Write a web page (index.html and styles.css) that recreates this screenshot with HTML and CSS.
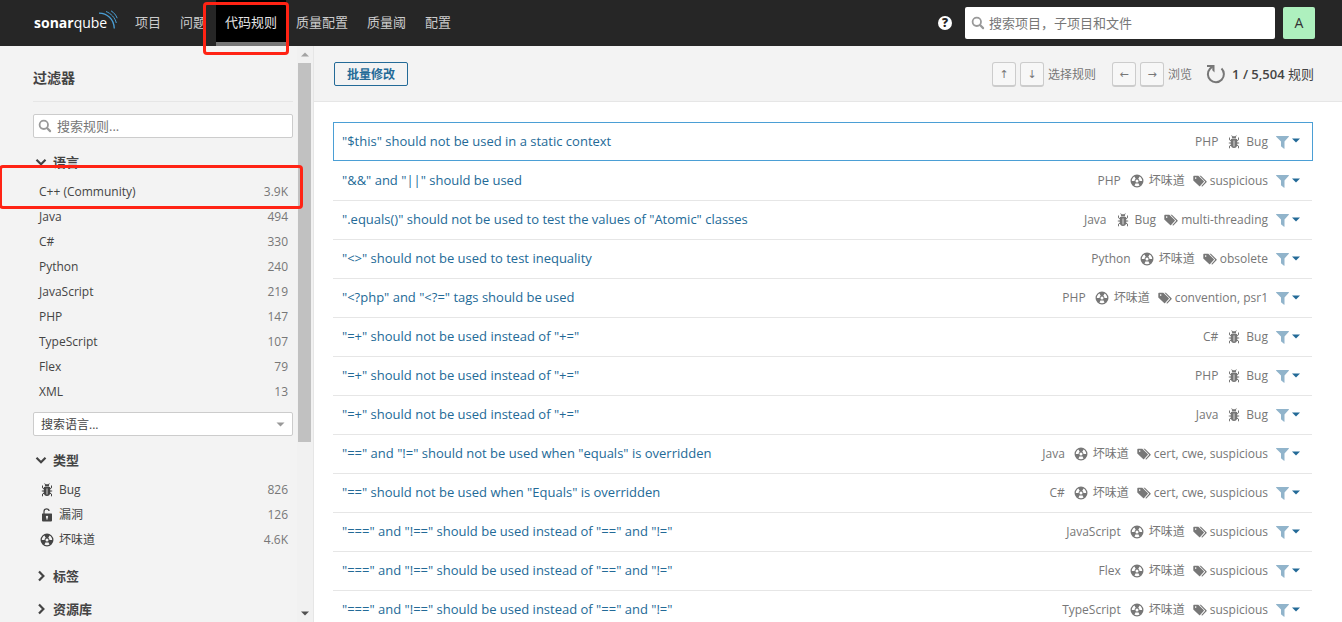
FILE: index.html
```html
<!DOCTYPE html>
<html lang="zh-CN">
<head>
<meta charset="utf-8">
<title>代码规则</title>
<link rel="stylesheet" href="styles.css">
</head>
<body>
<svg class="sprite" aria-hidden="true">
  <symbol id="bug" viewBox="0 0 12 14"><path fill="currentColor" d="M3.800 3.400C3.800 1.800 4.700 1.200 6 1.200s2.200.6 2.200 2.200zM3 4h6l.4 4.500C9.400 11.500 8 13 6 13s-3.400-1.500-3.400-4.500z"/><path fill="none" stroke="#f7f7f7" stroke-width=".8" d="M6 5.500v6"/><path fill="none" stroke="currentColor" stroke-width="1" d="M4.800 2.200 3.700.5M7.200 2.200 8.300.5M3.300 5.800 1.500 4.900V2.500M8.700 5.800l1.800-.9V2.500M3.200 8H.8M8.800 8h2.400M3.600 10l-2.100 1v2.300M8.400 10l2.100 1v2.300"/></symbol>
  <symbol id="lock" viewBox="0 0 12 14"><path fill="none" stroke="currentColor" stroke-width="1.200" d="M3 6V3.500C3 1.800 4 .8 5.600.8S8 1.700 8.100 3"/><path fill="currentColor" fill-rule="evenodd" d="M1.500 5.500h9q.5 0 .5.500v6.500q0 1-1 1H2q-1 0-1-1V6q0-.5.500-.5zM6 7.700a1.200 1.200 0 0 0-.6 2.200v1.600h1.200V9.900A1.200 1.200 0 0 0 6 7.700z"/></symbol>
  <symbol id="smell" viewBox="0.500 0.500 13 13"><path fill="currentColor" fill-rule="evenodd" d="M7 1a6 6 0 1 1 0 12A6 6 0 0 1 7 1zm0 4.600a1.400 1.400 0 1 0 0 2.800 1.400 1.400 0 0 0 0-2.800zM2.200 7h2.500c0-.8.4-1.500 1.100-2L4.600 2.900C3.100 3.800 2.200 5.300 2.200 7zm9.600 0c0-1.700-.9-3.200-2.400-4.100L8.200 5c.7.500 1.100 1.200 1.100 2zM4.600 11.100c1.500.9 3.300.9 4.800 0L8.200 9a2.300 2.300 0 0 1-2.400 0z"/></symbol>
  <symbol id="tags" viewBox="0 0 14 12"><path fill="currentColor" fill-rule="evenodd" d="M1 .8h4.300l5.400 5.300q.5.500 0 1L7.100 11q-.5.500-1 0L.3 5.600V1.500q0-.7.7-.7zM2.700 2.300a.8.800 0 1 0 0 1.600.8.800 0 0 0 0-1.600z"/><path fill="currentColor" d="M6.500.8h1.400L13.500 6.200q.5.500 0 1L9.600 11.200q-.5.400-1 0l-.2-.3 3.600-4q.2-.3 0-.5z"/></symbol>
  <symbol id="filter" viewBox="0 0 13 14"><path fill="currentColor" d="M.5 1h12q.8 0 .3.700L8.500 6.600v6.900q0 .6-.5.200l-2.800-2.200q-.2-.2-.2-.5V6.600L.2 1.700Q-.3 1 .5 1z"/></symbol>
  <symbol id="caret" viewBox="0 0 8 5"><path fill="currentColor" d="M0 .5h8L4 4.500z"/></symbol>
  <symbol id="search" viewBox="0 0 14 14"><circle cx="5.800" cy="5.800" r="4.200" fill="none" stroke="currentColor" stroke-width="1.800"/><path stroke="currentColor" stroke-width="2.200" stroke-linecap="round" d="m9.300 9.300 2.800 2.800"/></symbol>
  <symbol id="open" viewBox="0 0 12 12"><path fill="none" stroke="currentColor" stroke-width="2.200" d="m1.500 3.800 4.500 4.400 4.500-4.400"/></symbol>
  <symbol id="closed" viewBox="0 0 12 12"><path fill="none" stroke="currentColor" stroke-width="2.200" d="M4 1.500 8.400 6 4 10.500"/></symbol>
</svg>

<header class="navbar">
  <a class="logo" href="#" aria-label="sonarqube"><b>sonar</b><span>qube</span><svg class="waves" viewBox="0 0 20 20" aria-hidden="true"><path fill="none" stroke="#4b9fd5" stroke-width="1.300" d="M1 3.200C9 3.200 16 9 16.300 18.500"/><path fill="none" stroke="#4b9fd5" stroke-width="1" d="M8 1.500c5 2 9 6 10.300 11.500M13 .8c2.800 1.700 5 4.200 6.200 7.400"/></svg></a>
  <nav class="menu">
    <a href="#">项目</a>
    <a href="#">问题</a>
    <a class="active" href="#">代码规则</a>
    <a href="#">质量配置</a>
    <a href="#">质量阈</a>
    <a href="#">配置</a>
  </nav>
  <button class="help" type="button" aria-label="帮助">?</button>
  <label class="global-search"><svg class="i14"><use href="#search"/></svg><input type="text" aria-label="搜索" placeholder="搜索项目，子项目和文件"></label>
  <button class="avatar" type="button">A</button>
</header>

<div class="page">
  <aside class="sidebar">
    <div class="filters">
      <h1>过滤器</h1>
      <label class="rule-search"><svg class="i14"><use href="#search"/></svg><input type="text" aria-label="搜索规则" placeholder="搜索规则..."></label>
      <section>
        <h2><svg class="i12"><use href="#open"/></svg>语言</h2>
        <ul class="facets">
          <li><button type="button">C++ (Community)<span>3.9K</span></button></li>
          <li><button type="button">Java<span>494</span></button></li>
          <li><button type="button">C#<span>330</span></button></li>
          <li><button type="button">Python<span>240</span></button></li>
          <li><button type="button">JavaScript<span>219</span></button></li>
          <li><button type="button">PHP<span>147</span></button></li>
          <li><button type="button">TypeScript<span>107</span></button></li>
          <li><button type="button">Flex<span>79</span></button></li>
          <li><button type="button">XML<span>13</span></button></li>
        </ul>
        <div class="language-select"><select aria-label="搜索语言"><option>搜索语言...</option></select><svg class="caret"><use href="#caret"/></svg></div>
      </section>
      <section>
        <h2><svg class="i12"><use href="#open"/></svg>类型</h2>
        <ul class="facets types">
          <li><button type="button"><svg class="i14"><use href="#bug"/></svg>Bug<span>826</span></button></li>
          <li><button type="button"><svg class="i14"><use href="#lock"/></svg>漏洞<span>126</span></button></li>
          <li><button type="button"><svg class="i14"><use href="#smell"/></svg>坏味道<span>4.6K</span></button></li>
        </ul>
      </section>
      <section><h2><svg class="i12"><use href="#closed"/></svg>标签</h2></section>
      <section><h2><svg class="i12"><use href="#closed"/></svg>资源库</h2></section>
    </div>
    <div class="scrollbar" aria-hidden="true"><svg class="up"><use href="#caret"/></svg><div class="track"><div class="thumb"></div></div><svg class="down"><use href="#caret"/></svg></div>
  </aside>

  <main class="content">
    <div class="toolbar">
      <button class="bulk" type="button">批量修改</button>
      <div class="keys"><kbd>↑</kbd><kbd>↓</kbd><span>选择规则</span></div>
      <div class="keys"><kbd>←</kbd><kbd>→</kbd><span>浏览</span></div>
      <button class="reload" type="button" aria-label="刷新"><svg viewBox="0 0 20 20"><path fill="none" stroke="#777" stroke-width="2" d="M15.500 4.500A8 8 0 1 1 4 4.800L7 2"/><path fill="#777" d="M1 1h7.500v7.500L6.300 6.300V3H1z"/></svg></button>
      <div class="count"><strong>1 / 5,504</strong> 规则</div>
    </div>
    <ul class="rules" id="rules"></ul>
  </main>
</div>
<div class="mark mark-menu"></div>
<div class="mark mark-facet"></div>
<script src="rules.js"></script>
</body>
</html>
```
FILE: styles.css
```css
* { box-sizing: border-box; }
body { margin: 0; height: 100vh; overflow: hidden; display: flex; flex-direction: column; background: #fff; color: #444; font: 12px/18px "Open Sans", "Noto Sans CJK SC", sans-serif; }
button, input, select { font: inherit; color: inherit; margin: 0; }
button { padding: 0; border: 0; background: none; }
ul { list-style: none; margin: 0; padding: 0; }
a { text-decoration: none; }
svg { flex: none; display: block; }
.sprite { position: absolute; width: 0; height: 0; }
.i14 { width: 14px; height: 14px; }
.i12 { width: 12px; height: 12px; }

.navbar { flex: none; height: 46px; display: flex; align-items: center; padding: 0 27px 0 34px; background: #262626; }
.logo { display: flex; align-items: center; width: 92px; height: 44px; color: #fff; font: 14px/22px "Open Sans", sans-serif; position: relative; }
.logo b { font-weight: 700; }
.logo span { font-weight: 400; }
.waves { position: absolute; left: 64px; top: 9px; width: 20px; height: 20px; }
.menu { display: flex; flex: 1; gap: 1px; }
.menu a { height: 46px; padding: 0 9px; color: #ccc; font-size: 13px; line-height: 45px; border-bottom: 4px solid transparent; }
.menu .active { background: #000; background-clip: padding-box; border-color: #777; color: #e6e6e6; }
.help { width: 14px; height: 14px; border-radius: 50%; background: #fff; color: #262626; font-size: 12px; font-weight: 800; line-height: 14px; }
.global-search { display: flex; align-items: center; gap: 4px; width: 310px; height: 32px; margin: 0 8px 0 13px; padding: 0 6px; background: #fff; border-radius: 2px; color: #999; }
input { flex: 1; min-width: 0; border: 0; padding: 0; background: none; outline: 0; font-size: 13px; }
input::placeholder { color: #777; opacity: 1; }
.avatar { width: 32px; height: 32px; border-radius: 2px; background: #aef0be; color: #333; font-size: 14px; }

.page { flex: 1; min-height: 0; display: flex; }
.sidebar { flex: none; width: 314px; display: flex; background: #f3f3f3; border-right: 1px solid #e6e6e6; overflow: hidden; }
.filters { flex: 1; padding: 0 4px 0 33px; }
h1 { margin: 0 0 12px; padding: 22px 0 13px; font-size: 14px; line-height: 20px; border-bottom: 1px solid #e6e6e6; }
.rule-search { display: flex; align-items: center; gap: 5px; height: 24px; padding: 0 4px; background: #fff; border: 1px solid #ccc; border-radius: 2px; color: #999; }
.filters section { padding-top: 15px; }
h2 { display: flex; align-items: center; gap: 6px; margin: 0; padding-left: 2px; font-size: 13px; line-height: 18px; }
.facets { padding: 8px 0; }
.facets.types { padding-bottom: 0; }
.facets button { display: flex; align-items: center; width: 100%; height: 25px; padding: 0 5px 0 6px; }
.facets span { margin-left: auto; color: #777; }
.facets svg { margin: 0 5px 0 1px; }
.language-select { position: relative; height: 24px; }
.language-select select { appearance: none; width: 100%; height: 24px; padding: 2px 7px 0; background: #fff; border: 1px solid #ccc; border-radius: 2px; }
.caret { position: absolute; right: 8px; top: 10px; width: 9px; height: 5px; color: #999; }
.scrollbar { flex: none; width: 16px; display: flex; flex-direction: column; align-items: center; background: #f1f1f1; }
.scrollbar svg { width: 8px; height: 5px; margin: 6px 0; color: #a3a3a3; }
.scrollbar .up { transform: rotate(180deg); }
.scrollbar .down { color: #505050; }
.track { flex: 1; width: 14px; }
.thumb { width: 13px; height: 70%; background: #c1c1c1; }

.content { flex: 1; min-width: 0; }
.toolbar { display: flex; align-items: center; height: 56px; padding: 0 28px 0 20px; background: #f3f3f3; border-bottom: 1px solid #e6e6e6; }
.bulk { margin-right: auto; padding: 2px 12px 0; height: 24px; border: 1px solid #236a97; border-radius: 2px; color: #236a97; font-weight: 600; }
.keys { display: flex; align-items: center; gap: 4px; padding-top: 2px; margin-right: 16px; color: #777; }
kbd { width: 24px; height: 25px; border: 1px solid #ccc; border-bottom-width: 2px; border-radius: 3px; background: #f7f7f7; text-align: center; font: 11px/22px "Noto Sans", "DejaVu Sans", sans-serif; }
.reload { margin: 0 6px 0 -2px; }
.reload svg { width: 20px; height: 20px; }
.count { font-size: 13px; }
.count strong { font-weight: 600; }
.rules { padding: 20px 30px 0 19px; }
.rule { display: flex; align-items: center; height: 39px; padding: 0 12px 0 9px; border-bottom: 1px solid #e6e6e6; }
.rule.selected { border: 1px solid #4b9fd5; padding: 0 12px 0 8px; margin: 0 -1px 1px 0; }
.rule > a { flex: 1; padding-bottom: 2px; color: #236a97; font-size: 13px; }
.meta { display: flex; align-items: center; color: #777; }
.kind { display: flex; align-items: center; gap: 5px; margin-left: 9px; }
.tags { display: flex; align-items: center; gap: 3px; margin-left: 8px; }
.tags svg { width: 14px; height: 12px; }
.similar { display: flex; align-items: center; gap: 3px; margin-left: 8px; color: #236a97; }
.similar .funnel { width: 13px; height: 14px; color: #91b4cb; }
.similar .arrow { width: 8px; height: 5px; margin-bottom: 2px; }

.mark { position: absolute; border: 3px solid #ff2314; border-radius: 4px; pointer-events: none; }
.mark-menu { left: 203px; top: 2px; width: 86px; height: 53px; }
.mark-facet { left: -1px; top: 165px; width: 304px; height: 44px; }
```
FILE: rules.js
```javascript
const rules = [
  ['"$this" should not be used in a static context', 'PHP', 'bug', ''],
  ['"&&" and "||" should be used', 'PHP', 'smell', 'suspicious'],
  ['".equals()" should not be used to test the values of "Atomic" classes', 'Java', 'bug', 'multi-threading'],
  ['"<>" should not be used to test inequality', 'Python', 'smell', 'obsolete'],
  ['"<?php" and "<?=" tags should be used', 'PHP', 'smell', 'convention, psr1'],
  ['"=+" should not be used instead of "+="', 'C#', 'bug', ''],
  ['"=+" should not be used instead of "+="', 'PHP', 'bug', ''],
  ['"=+" should not be used instead of "+="', 'Java', 'bug', ''],
  ['"==" and "!=" should not be used when "equals" is overridden', 'Java', 'smell', 'cert, cwe, suspicious'],
  ['"==" should not be used when "Equals" is overridden', 'C#', 'smell', 'cert, cwe, suspicious'],
  ['"===" and "!==" should be used instead of "==" and "!="', 'JavaScript', 'smell', 'suspicious'],
  ['"===" and "!==" should be used instead of "==" and "!="', 'Flex', 'smell', 'suspicious'],
  ['"===" and "!==" should be used instead of "==" and "!="', 'TypeScript', 'smell', 'suspicious']
];
const names = { bug: 'Bug', smell: '坏味道' };
const icon = (id, cls) => `<svg class="${cls}"><use href="#${id}"/></svg>`;
const list = document.getElementById('rules');
rules.forEach(([title, language, type, tags], index) => {
  const row = document.createElement('li');
  row.className = index === 0 ? 'rule selected' : 'rule';
  row.innerHTML = `<a href="#"></a><div class="meta"><span>${language}</span>` +
    `<span class="kind">${icon(type, 'i14')}${names[type]}</span>` +
    (tags ? `<span class="tags">${icon('tags', 'tag')}${tags}</span>` : '') +
    `<button class="similar" type="button" aria-label="相似规则">${icon('filter', 'funnel')}${icon('caret', 'arrow')}</button></div>`;
  row.querySelector('a').textContent = title;
  list.appendChild(row);
});
```
